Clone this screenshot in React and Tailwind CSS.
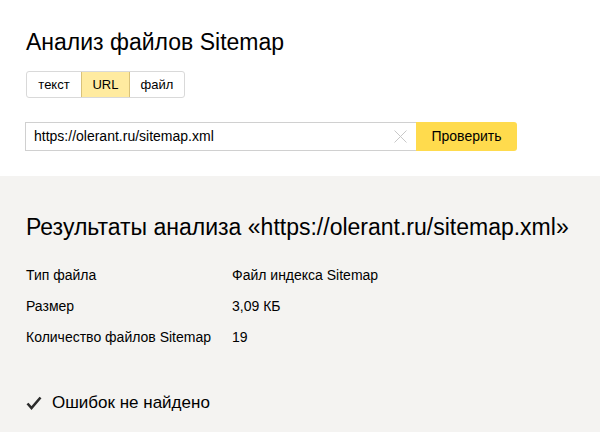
import React from "react";

const rows = [
  ["Тип файла", "Файл индекса Sitemap"],
  ["Размер", "3,09 КБ"],
  ["Количество файлов Sitemap", "19"],
];

const App = () => {
  return (
    <div className="w-[600px] h-[432px] overflow-hidden font-['Liberation_Sans',Arial,sans-serif] text-black">
      <section className="bg-white px-[26px] pt-[28px] pb-[25px]">
        <h1 className="text-[23px] leading-[28px]">Анализ файлов Sitemap</h1>
        <div className="mt-[15px] flex w-max h-[27px] border border-[#d9d9d9] rounded-[3px] text-[13px]">
          <button className="w-[54px] flex items-center justify-center">текст</button>
          <button className="w-[49px] flex items-center justify-center bg-[#ffeba0] border-x border-[#d9c27a]">URL</button>
          <button className="w-[54px] flex items-center justify-center">файл</button>
        </div>
        <div className="mt-[24px] flex h-[29px]">
          <div className="w-[391px] flex items-center border border-[#d0d0d0] border-r-0 -ml-px pl-[8px] pr-[9px]">
            <span className="flex-1 text-[14px]">https://olerant.ru/sitemap.xml</span>
            <svg width="13" height="13" viewBox="0 0 13 13">
              <path d="M0.5 0.5 L12.5 12.5 M12.5 0.5 L0.5 12.5" stroke="#c8c8c8" strokeWidth="1" />
            </svg>
          </div>
          <button className="w-[101px] bg-[#ffdb4d] rounded-r-[3px] text-[14px] flex items-center justify-center">
            Проверить
          </button>
        </div>
      </section>
      <section className="bg-[#f4f3f1] h-full px-[26px] pt-[37px]">
        <h2 className="text-[23px] leading-[28px] whitespace-nowrap">Результаты анализа «https://olerant.ru/sitemap.xml»</h2>
        <div className="mt-[19px] text-[14px]">
          {rows.map((r, i) => (
            <div key={i} className="flex leading-[31px]">
              <span className="w-[206px]">{r[0]}</span>
              <span>{r[1]}</span>
            </div>
          ))}
        </div>
        <div className="mt-[38px] flex items-center leading-[24px] text-[17px]">
          <svg width="16" height="14" viewBox="0 0 16 14" className="mr-[10px]">
            <path d="M1.5 7.5 L5.5 12 L14.5 1.5" fill="none" stroke="#2b2b2b" strokeWidth="2.6" />
          </svg>
          <span>Ошибок не найдено</span>
        </div>
      </section>
    </div>
  );
};

export default App;
